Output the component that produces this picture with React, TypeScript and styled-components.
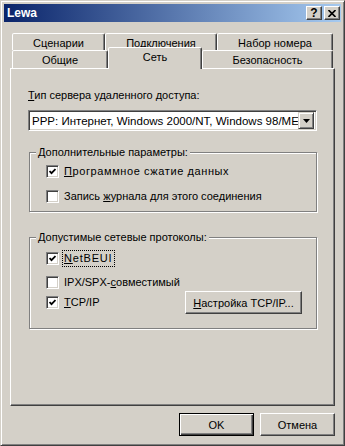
import React, { ReactElement, ReactNode } from 'react'
import styled, { createGlobalStyle, css } from 'styled-components'

const face = '#d4d0c8'
const shadow = '#808080'
const darkShadow = '#404040'
const uiFont = "'Liberation Sans', Arial, sans-serif"

const GlobalStyle = createGlobalStyle`
  html, body {
    margin: 0;
    padding: 0;
    background: ${face};
  }
  body {
    font-family: ${uiFont};
    font-size: 11px;
    color: #000;
  }
`

const Window = styled.div`
  box-sizing: border-box;
  width: 345px;
  height: 446px;
  display: flex;
  flex-direction: column;
  padding: 3px;
  background: ${face};
  border: 1px solid;
  border-color: ${face} ${darkShadow} ${darkShadow} ${face};
  box-shadow: inset 1px 1px #fff, inset -1px -1px ${shadow};
`
const TitleBar = styled.div`
  display: flex;
  align-items: center;
  height: 18px;
  padding: 0 1px 0 3px;
  background: linear-gradient(to right, #0a246a, #a6caf0);
`
const Title = styled.span`
  flex: 1;
  color: #fff;
  font-weight: bold;
  font-size: 12px;
`
const CaptionButton = styled.span`
  box-sizing: border-box;
  width: 16px;
  height: 14px;
  margin-left: 2px;
  display: flex;
  align-items: center;
  justify-content: center;
  background: ${face};
  border: 1px solid;
  border-color: #fff ${darkShadow} ${darkShadow} #fff;
  box-shadow: inset -1px -1px ${shadow};
  font-weight: bold;
  font-size: 12px;
  line-height: 12px;
`
const Body = styled.div`
  flex: 1;
  display: flex;
  flex-direction: column;
  padding: 11px 6px 6px 6px;
`
const TabStrip = styled.div`
  display: flex;
  flex-direction: column;
  margin: 0 2px;
`
const TabRow = styled.div<{ $h: number }>`
  display: flex;
  align-items: flex-start;
  height: ${p => p.$h}px;
`
const Tab = styled.div<{ $w: number; $selected?: boolean }>`
  box-sizing: border-box;
  width: ${p => p.$w}px;
  height: 100%;
  display: flex;
  align-items: center;
  justify-content: center;
  padding-top: 1px;
  background: ${face};
  border: 1px solid;
  border-bottom: none;
  border-color: #fff ${darkShadow} transparent #fff;
  border-radius: 2px 2px 0 0;
  box-shadow: inset -1px 0 ${shadow};
  white-space: nowrap;
  ${p =>
    p.$selected &&
    css`
      position: relative;
      z-index: 1;
      height: 22px;
      margin-top: -3px;
      padding-bottom: 4px;
    `}
`
const Panel = styled.div`
  flex: 1;
  display: flex;
  flex-direction: column;
  align-items: flex-start;
  padding: 20px 18px 0 17px;
  background: ${face};
  border: 1px solid;
  border-color: #fff ${darkShadow} ${darkShadow} #fff;
  box-shadow: inset -1px -1px ${shadow};
`
const FieldLabel = styled.div`
  line-height: 13px;
`
const Combo = styled.div`
  box-sizing: border-box;
  width: 289px;
  height: 21px;
  margin-top: 8px;
  display: flex;
  align-items: center;
  padding: 2px;
  background: #fff;
  border: 1px solid;
  border-color: ${shadow} #fff #fff ${shadow};
  box-shadow: inset 1px 1px ${darkShadow}, inset -1px -1px ${face};
`
const ComboText = styled.span`
  flex: 1;
  padding-left: 1px;
  white-space: nowrap;
  overflow: hidden;
  font-size: 11.5px;
`
const ComboArrow = styled.span`
  box-sizing: border-box;
  width: 16px;
  height: 17px;
  display: flex;
  align-items: center;
  justify-content: center;
  background: ${face};
  border: 1px solid;
  border-color: ${face} ${darkShadow} ${darkShadow} ${face};
  box-shadow: inset 1px 1px #fff, inset -1px -1px ${shadow};
`
const Group = styled.fieldset<{ $mt: number; $pt: number; $pb: number }>`
  box-sizing: border-box;
  width: 288px;
  min-width: 0;
  margin: ${p => p.$mt}px 0 0 1px;
  padding: ${p => p.$pt}px 14px ${p => p.$pb}px 16px;
  display: flex;
  flex-direction: column;
  border: 1px solid ${shadow};
  box-shadow: inset 1px 1px #fff, 1px 1px #fff;
`
const Legend = styled.legend`
  padding: 0 2px;
  margin-left: -10px;
  line-height: 13px;
  background: ${face};
`
const CheckRow = styled.div<{ $mt?: number; $h?: number }>`
  display: flex;
  align-items: center;
  height: ${p => p.$h ?? 13}px;
  margin-top: ${p => p.$mt ?? 0}px;
  line-height: 13px;
  white-space: nowrap;
`
const Box = styled.span`
  box-sizing: border-box;
  width: 13px;
  height: 13px;
  margin-right: 5px;
  display: flex;
  align-items: center;
  justify-content: center;
  background: #fff;
  border: 1px solid;
  border-color: ${shadow} #fff #fff ${shadow};
  box-shadow: inset 1px 1px ${darkShadow}, inset -1px -1px ${face};
`
const CheckText = styled.span<{ $spacing?: number }>`
  letter-spacing: ${p => p.$spacing ?? 0}px;
`
const Focused = styled.span`
  outline: 1px dotted #000;
  outline-offset: 1px;
  padding: 0 1px 0 0;
  letter-spacing: 0.8px;
`
const PushButton = styled.button<{ $w: number; $default?: boolean }>`
  box-sizing: border-box;
  width: ${p => p.$w}px;
  height: 23px;
  margin: 0;
  padding: 0;
  font-family: ${uiFont};
  font-size: 11px;
  color: #000;
  background: ${face};
  border: 1px solid;
  border-color: #fff ${darkShadow} ${darkShadow} #fff;
  box-shadow: inset -1px -1px ${shadow};
  ${p =>
    p.$default &&
    css`
      border-color: #000;
      box-shadow: inset 1px 1px #fff, inset -1px -1px ${darkShadow}, inset -2px -2px ${shadow};
    `}
`
const SideButton = styled(PushButton)`
  margin-left: auto;
`
const Footer = styled.div`
  display: flex;
  justify-content: flex-end;
  gap: 6px;
  margin-top: 7px;
`

const CheckMark = (): ReactElement => (
  <svg width="7" height="7" viewBox="0 0 7 7">
    <path d="M0.5 3 L2.5 5.2 L6.5 1" fill="none" stroke="#000" strokeWidth="1.8" />
  </svg>
)

const Check = ({ checked, children, mt, h }: { checked?: boolean; children: ReactNode; mt?: number; h?: number }): ReactElement => (
  <CheckRow $mt={mt} $h={h}>
    <Box>{checked && <CheckMark />}</Box>
    {children}
  </CheckRow>
)

const App = (): ReactElement => {
  return (
    <>
      <GlobalStyle />
      <Window>
        <TitleBar>
          <Title>Lewa</Title>
          <CaptionButton>?</CaptionButton>
          <CaptionButton>
            <svg width="8" height="7" viewBox="0 0 8 7">
              <path d="M0.5 0 L7.5 7 M7.5 0 L0.5 7" stroke="#000" strokeWidth="1.6" />
            </svg>
          </CaptionButton>
        </TitleBar>
        <Body>
          <TabStrip>
            <TabRow $h={17}>
              <Tab $w={93}>Сценарии</Tab>
              <Tab $w={112}>Подключения</Tab>
              <Tab $w={116}>Набор номера</Tab>
            </TabRow>
            <TabRow $h={18}>
              <Tab $w={96}>Общие</Tab>
              <Tab $w={94} $selected>
                Сеть
              </Tab>
              <Tab $w={131}>Безопасность</Tab>
            </TabRow>
          </TabStrip>
          <Panel>
            <FieldLabel>
              <u>Т</u>ип сервера удаленного доступа:
            </FieldLabel>
            <Combo>
              <ComboText>PPP: Интернет, Windows 2000/NT, Windows 98/ME</ComboText>
              <ComboArrow>
                <svg width="7" height="4" viewBox="0 0 7 4">
                  <path d="M0 0 H7 L3.5 4 Z" fill="#000" />
                </svg>
              </ComboArrow>
            </Combo>
            <Group $mt={15} $pt={6} $pb={8}>
              <Legend>Дополнительные параметры:</Legend>
              <Check checked>
                <CheckText $spacing={0.6}>
                  <u>П</u>рограммное сжатие данных
                </CheckText>
              </Check>
              <Check mt={12}>
                <CheckText>
                  Запись <u>ж</u>урнала для этого соединения
                </CheckText>
              </Check>
            </Group>
            <Group $mt={19} $pt={8} $pb={14}>
              <Legend>Допустимые сетевые протоколы:</Legend>
              <Check checked>
                <Focused>
                  <u>N</u>etBEUI
                </Focused>
              </Check>
              <Check mt={11}>
                <CheckText>
                  IPX/SPX-<u>с</u>овместимый
                </CheckText>
              </Check>
              <Check checked mt={2} h={23}>
                <CheckText>
                  <u>T</u>CP/IP
                </CheckText>
                <SideButton $w={117}>
                  <u>Н</u>астройка TCP/IP...
                </SideButton>
              </Check>
            </Group>
          </Panel>
          <Footer>
            <PushButton $w={75} $default>
              OK
            </PushButton>
            <PushButton $w={75}>Отмена</PushButton>
          </Footer>
        </Body>
      </Window>
    </>
  )
}

export default App
